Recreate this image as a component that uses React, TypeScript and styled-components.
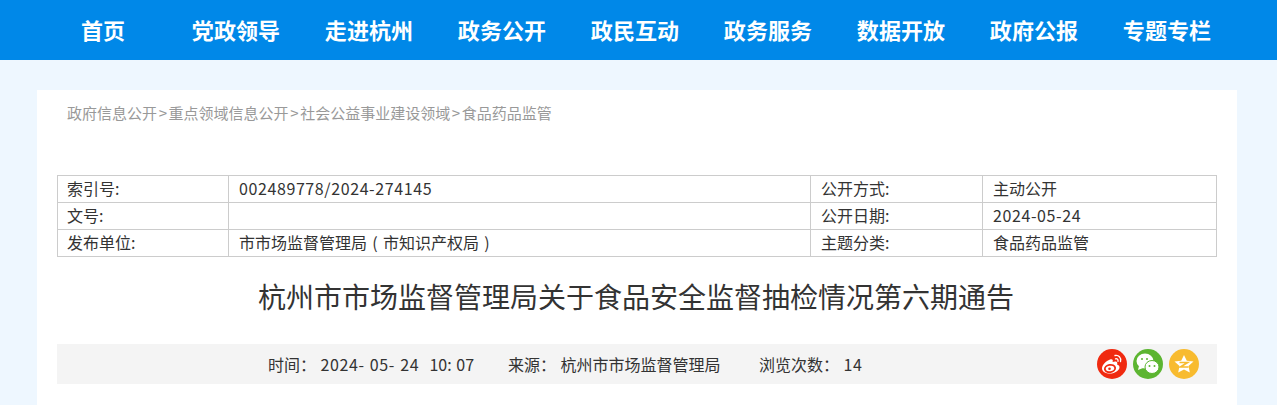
import React from "react";
import styled, { createGlobalStyle } from "styled-components";

const Global = createGlobalStyle`
  html, body { margin: 0; padding: 0; height: 405px; overflow: hidden; background: #eef7ff; }
  body { font-family: "Noto Sans CJK SC", "Liberation Sans", sans-serif; }
`;
const NavBar = styled.nav`
  height: 60px; background: #0088e8; display: flex; padding-left: 36.5px;
`;
const NavItem = styled.a`
  width: 133px; text-align: center; line-height: 59px; color: #fff;
  font-size: 22px; font-weight: 700; flex: none; letter-spacing: 0.1px;
`;
const Card = styled.main`
  width: 1200px; margin: 30px 0 0 37px; background: #fff; height: 400px;
  padding: 0 20px; box-sizing: border-box;
`;
const Crumbs = styled.div`
  height: 85px; padding: 13px 0 0 10px; box-sizing: border-box; font-size: 15px;
  line-height: 20px; color: #999; display: flex;
`;
const Sep = styled.span`
  width: 11.6px; text-align: center; flex: none;
`;
const InfoTable = styled.table`
  width: 1160px; border-collapse: collapse; table-layout: fixed; font-size: 16px; color: #333;
`;
const Cell = styled.td<{ $first?: boolean }>`
  border: 1px solid #ccc; height: 25px; padding: 0 10px 1px ${(p) => (p.$first ? 9 : 10)}px;
  line-height: 25px; box-sizing: content-box; white-space: nowrap; overflow: hidden;
`;
const Num = styled.span<{ $tight?: boolean }>`
  letter-spacing: ${(p) => (p.$tight ? 0 : 0.6)}px;
`;
const Paren = styled.span`
  display: inline-block; width: 16px; text-align: center;
`;
const Title = styled.h1`
  margin: 0; height: 87px; line-height: 79px; text-align: center; font-size: 28px; font-weight: 400;
  color: #333; width: 1158px;
`;
const MetaBar = styled.div`
  height: 40px; width: 1160px; background: #f4f4f4; display: flex; align-items: center;
  font-size: 16px; color: #333; padding-left: 211px; box-sizing: border-box;
`;
const MetaItem = styled.span<{ $width: number }>`
  width: ${(p) => p.$width}px; flex: none; white-space: pre; word-spacing: 1px;
`;
const Share = styled.div`
  margin-left: auto; margin-right: 18px; display: flex; gap: 6px;
`;
const Round = styled.div<{ $bg: string }>`
  width: 30px; height: 30px; border-radius: 50%; background: ${(p) => p.$bg};
  display: flex; align-items: center; justify-content: center;
`;

const rows: React.ReactNode[][] = [
  ["索引号:", <Num>002489778/2024-274145</Num>, "公开方式:", "主动公开"],
  ["文号:", "", "公开日期:", <Num>2024-05-24</Num>],
  ["发布单位:", <>市市场监督管理局<Paren>(</Paren>市知识产权局<Paren>)</Paren></>, "主题分类:", "食品药品监管"],
];
const nav = ["首页", "党政领导", "走进杭州", "政务公开", "政民互动", "政务服务", "数据开放", "政府公报", "专题专栏"];
const crumbs = ["政府信息公开", "重点领域信息公开", "社会公益事业建设领域", "食品药品监管"];

export default function App() {
  return (
    <>
      <Global />
      <NavBar>{nav.map((n) => <NavItem key={n}>{n}</NavItem>)}</NavBar>
      <Card>
        <Crumbs>
          {crumbs.map((c, i) => (
            <React.Fragment key={c}>
              {i > 0 && <Sep>&gt;</Sep>}
              <span>{c}</span>
            </React.Fragment>
          ))}
        </Crumbs>
        <InfoTable>
          <colgroup>
            <col style={{ width: 171 }} />
            <col style={{ width: 582 }} />
            <col style={{ width: 172 }} />
            <col style={{ width: 234 }} />
          </colgroup>
          <tbody>
            {rows.map((r, k) => (
              <tr key={k}>{r.map((c, i) => <Cell key={i} $first={i === 0}>{c}</Cell>)}</tr>
            ))}
          </tbody>
        </InfoTable>
        <Title>杭州市市场监督管理局关于食品安全监督抽检情况第六期通告</Title>
        <MetaBar>
          <MetaItem $width={240}>时间： <Num>2024- 05- 24  </Num><Num $tight>10: 07</Num></MetaItem>
          <MetaItem $width={251}>来源： 杭州市市场监督管理局</MetaItem>
          <MetaItem $width={120}>浏览次数： <Num>14</Num></MetaItem>
          <Share>
            <Round $bg="#f02a10">
              <svg width="26" height="24" viewBox="0 0 26 24" fill="none">
                <path d="M3 16.500c0-3.500 4-7.500 8-9 2.300-.8 3.300.3 2.600 2.500 2.500-1 4.700-.8 4.700 1.200 0 .5-.1.900-.3 1.200 1.500.5 2.500 1.400 2.500 2.800 0 3-4.500 6.300-9.500 6.300-4.500 0-8-2-8-5z" fill="#fff" />
                <ellipse cx="11" cy="16.500" rx="5.200" ry="3.600" stroke="#f02a10" strokeWidth="1.800" transform="rotate(-10 11 16.500)" />
                <circle cx="10.500" cy="16.700" r="1.300" fill="#f02a10" />
                <path d="M16 3.500c3.500-.8 6.500 2 5.500 6M16.500 6.800c1.600-.4 2.900.9 2.500 2.600" stroke="#fff" strokeWidth="1.300" strokeLinecap="round" />
              </svg>
            </Round>
            <Round $bg="#5cb531">
              <svg width="26" height="24" viewBox="0 0 26 24">
                <ellipse cx="10" cy="9" rx="8.500" ry="7.500" fill="#fff" />
                <path d="M4 14l-1 4 5-2z" fill="#fff" />
                <ellipse cx="17" cy="15" rx="7" ry="6.500" fill="#fff" stroke="#5cb531" strokeWidth="1" />
                <circle cx="7" cy="7" r="1" fill="#5cb531" /><circle cx="12" cy="7" r="1" fill="#5cb531" />
                <circle cx="14.500" cy="14" r="1" fill="#5cb531" /><circle cx="19.500" cy="14" r="1" fill="#5cb531" />
              </svg>
            </Round>
            <Round $bg="#f8bb2f">
              <svg width="24" height="24" viewBox="0 0 24 24" fill="none">
                <path d="M12 3l2.800 5.700 6.700.9-5 4.500 1.300 6.400-5.800-3-5.800 3 1.300-6.400-5-4.500 6.700-.9z" fill="#fff" />
                <path d="M7.500 10.500h8l-7 4.500h8" stroke="#f8bb2f" strokeWidth="1.700" />
              </svg>
            </Round>
          </Share>
        </MetaBar>
      </Card>
    </>
  );
}
